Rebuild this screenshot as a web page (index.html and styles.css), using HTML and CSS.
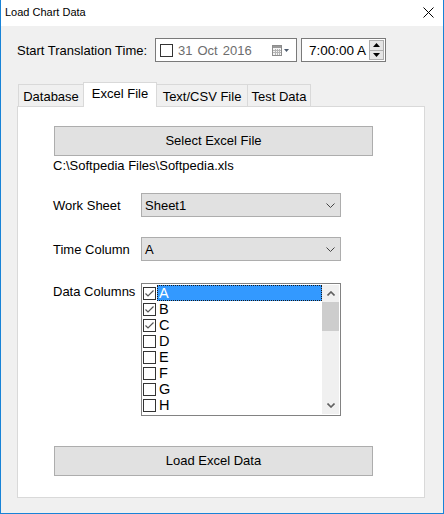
FILE: index.html
```html
<!DOCTYPE html>
<html>
<head>
<meta charset="utf-8">
<link rel="stylesheet" href="styles.css">
</head>
<body>
<div class="window">
  <div class="titlebar">
    <span class="title">Load Chart Data</span>
    <svg class="close" width="11" height="11" viewBox="0 0 11 11"><path d="M0.5 0.5 L10.5 10.5 M10.5 0.5 L0.5 10.5" stroke="#000" stroke-width="1"/></svg>
  </div>
  <div class="client">
    <div class="toprow">
      <span class="label">Start Translation Time:</span>
      <div class="datepicker">
        <span class="cb"></span>
        <span class="date"><span>31</span><span>Oct</span><span>2016</span></span>
        <svg class="cal" width="18" height="11" viewBox="0 0 18 11">
          <rect x="0.5" y="0.5" width="9" height="10" fill="#f4f4f4" stroke="#8c8c8c"/>
          <rect x="1" y="1" width="8" height="2" fill="#9a9a9a"/>
          <path d="M1 5.5 H9 M1 7.5 H9 M3.5 4 V10 M5.5 4 V10 M7.5 4 V10" stroke="#b4b4b4" stroke-width="1"/>
          <path d="M12 4 L17 4 L14.5 7 Z" fill="#4c5a6c"/>
        </svg>
      </div>
      <div class="timepicker">
        <span class="time">7:00:00 A</span>
        <div class="spin">
          <span class="sbtn"><svg width="7" height="4" viewBox="0 0 7 4"><path d="M0 4 L3.5 0 L7 4 Z" fill="#000"/></svg></span>
          <span class="sbtn"><svg width="7" height="4" viewBox="0 0 7 4"><path d="M0 0 L7 0 L3.5 4 Z" fill="#000"/></svg></span>
        </div>
      </div>
    </div>
    <div class="tabs">
      <div class="tab">Database</div>
      <div class="tab active">Excel File</div>
      <div class="tab">Text/CSV File</div>
      <div class="tab">Test Data</div>
    </div>
    <div class="panel">
      <div class="btn">Select Excel File</div>
      <div class="path">C:\Softpedia Files\Softpedia.xls</div>
      <div class="frow first">
        <span class="flabel">Work Sheet</span>
        <div class="combo"><span>Sheet1</span><svg width="9" height="5" viewBox="0 0 9 5"><path d="M0.5 0.5 L4.5 4.5 L8.5 0.5" fill="none" stroke="#444" stroke-width="1"/></svg></div>
      </div>
      <div class="frow">
        <span class="flabel">Time Column</span>
        <div class="combo"><span>A</span><svg width="9" height="5" viewBox="0 0 9 5"><path d="M0.5 0.5 L4.5 4.5 L8.5 0.5" fill="none" stroke="#444" stroke-width="1"/></svg></div>
      </div>
      <div class="frow list-row">
        <span class="flabel top">Data Columns</span>
        <div class="listbox">
          <div class="items">
            <div class="item"><span class="chk on"><svg width="11" height="11" viewBox="0 0 11 11"><path d="M1.5 5.5 L4 8 L9.5 2.5" fill="none" stroke="#555" stroke-width="1.2"/></svg></span><span class="txt sel">A</span></div>
            <div class="item"><span class="chk on"><svg width="11" height="11" viewBox="0 0 11 11"><path d="M1.5 5.5 L4 8 L9.5 2.5" fill="none" stroke="#555" stroke-width="1.2"/></svg></span><span class="txt">B</span></div>
            <div class="item"><span class="chk on"><svg width="11" height="11" viewBox="0 0 11 11"><path d="M1.5 5.5 L4 8 L9.5 2.5" fill="none" stroke="#555" stroke-width="1.2"/></svg></span><span class="txt">C</span></div>
            <div class="item"><span class="chk"></span><span class="txt">D</span></div>
            <div class="item"><span class="chk"></span><span class="txt">E</span></div>
            <div class="item"><span class="chk"></span><span class="txt">F</span></div>
            <div class="item"><span class="chk"></span><span class="txt">G</span></div>
            <div class="item"><span class="chk"></span><span class="txt">H</span></div>
          </div>
          <div class="scrollbar">
            <span class="arrow"><svg width="8" height="5" viewBox="0 0 8 5"><path d="M0.5 4.5 L4 1 L7.5 4.5" fill="none" stroke="#606060" stroke-width="1.6"/></svg></span>
            <span class="thumb"></span>
            <span class="track"></span>
            <span class="arrow"><svg width="8" height="5" viewBox="0 0 8 5"><path d="M0.5 0.5 L4 4 L7.5 0.5" fill="none" stroke="#606060" stroke-width="1.6"/></svg></span>
          </div>
        </div>
      </div>
      <div class="btn load">Load Excel Data</div>
    </div>
  </div>
</div>
</body>
</html>
```
FILE: styles.css
```css
* { box-sizing: border-box; }
html, body { margin: 0; padding: 0; }
body {
  width: 444px;
  height: 514px;
  font-family: "Liberation Sans", Arial, sans-serif;
  font-size: 13px;
  color: #000;
  overflow: hidden;
}
.window {
  width: 444px;
  height: 514px;
  border: 1px solid #1883d7;
  border-top: none;
  display: flex;
  flex-direction: column;
  background: #f0f0f0;
}
.titlebar {
  height: 26px;
  background: #fff;
  display: flex;
  align-items: center;
  padding-left: 4px;
  padding-right: 9px;
  flex: none;
}
.title {
  font-size: 11px;
  flex: 1;
  padding-bottom: 2px;
}
.close { display: block; margin-bottom: 1px; }
.client {
  flex: 1;
  padding: 12px 18px 15px 16px;
  display: flex;
  flex-direction: column;
}
.toprow {
  height: 24px;
  display: flex;
  align-items: center;
}
.label { width: 138px; }
.datepicker {
  width: 142px;
  height: 24px;
  border: 1px solid #7a7a7a;
  background: #fff;
  display: flex;
  align-items: center;
  padding-left: 4px;
}
.cb {
  width: 13px;
  height: 13px;
  border: 1px solid #333;
  background: #fff;
  margin-top: 1px;
}
.date {
  color: #6d6d6d;
  margin-left: 5px;
  display: flex;
  gap: 5px;
  width: 91px;
}
.cal { margin-left: 3px; display: block; }
.timepicker {
  width: 85px;
  height: 24px;
  margin-left: 4px;
  border: 1px solid #7a7a7a;
  background: #fff;
  display: flex;
  align-items: center;
  padding-left: 7px;
  padding-right: 1px;
}
.time {
  flex: 1;
  white-space: nowrap;
  font-size: 13.5px;
}
.spin {
  width: 15px;
  height: 20px;
  border: 1px solid #adadad;
  background: #e5e5e5;
  display: flex;
  flex-direction: column;
}
.sbtn {
  flex: 1;
  display: flex;
  align-items: center;
  justify-content: center;
}
.sbtn + .sbtn { border-top: 1px solid #adadad; }
.sbtn svg { display: block; }
.tabs {
  margin-top: 20px;
  height: 24px;
  display: flex;
  align-items: flex-end;
  padding-left: 1px;
  position: relative;
  z-index: 1;
}
.tab {
  height: 22px;
  border: 1px solid #d9d9d9;
  border-bottom: none;
  background: #f0f0f0;
  display: flex;
  align-items: center;
  justify-content: center;
  padding-top: 1px;
}
.tab:nth-child(1) { width: 66px; }
.tab:nth-child(2) { width: 73px; }
.tab:nth-child(3) { width: 92px; margin-left: -1px; }
.tab:nth-child(4) { width: 64px; margin-left: -1px; }
.tab.active {
  height: 25px;
  margin-bottom: -1px;
  background: #fff;
  padding-top: 0;
  padding-bottom: 3px;
  margin-left: -1px;
  width: 74px;
}
.panel {
  height: 392px;
  border: 1px solid #d9d9d9;
  background: #fff;
  padding: 19px 0 0 35px;
}
.btn {
  margin-left: 1px;
  width: 319px;
  height: 30px;
  background: #e1e1e1;
  border: 1px solid #adadad;
  display: flex;
  align-items: center;
  justify-content: center;
  padding-bottom: 1px;
}
.path {
  margin-top: 2px;
  line-height: 15px;
}
.frow {
  display: flex;
  align-items: center;
  margin-top: 20px;
}
.frow.first { margin-top: 20px; }
.flabel { width: 88px; }
.combo {
  width: 200px;
  height: 24px;
  background: #e1e1e1;
  border: 1px solid #adadad;
  display: flex;
  align-items: center;
  justify-content: space-between;
  padding-left: 3px;
  padding-right: 5px;
}
.combo svg { display: block; }
.list-row {
  margin-top: 22px;
  align-items: flex-start;
}
.flabel.top {
  line-height: 15px;
  padding-top: 1px;
}
.listbox {
  width: 200px;
  height: 133px;
  border: 1px solid #828282;
  padding: 1px;
  display: flex;
  background: #fff;
}
.items { flex: 1; }
.item {
  height: 16px;
  display: flex;
  align-items: flex-start;
  font-size: 14.5px;
}
.chk {
  width: 13px;
  height: 13px;
  border: 1px solid #333;
  margin-top: 2px;
  flex: none;
  display: flex;
  align-items: center;
  justify-content: center;
}
.chk svg { display: block; }
.txt {
  margin-left: 1px;
  height: 16px;
  line-height: 17px;
  padding-left: 2px;
}
.txt.sel {
  flex: 1;
  background: #3399ff;
  color: #fff;
  border: 1px dotted #1a1a1a;
  line-height: 15px;
  padding-left: 1px;
}
.scrollbar {
  width: 17px;
  display: flex;
  flex-direction: column;
  background: #f0f0f0;
}
.arrow {
  height: 17px;
  flex: none;
  display: flex;
  align-items: center;
  justify-content: center;
}
.arrow svg { display: block; }
.thumb {
  height: 29px;
  background: #cdcdcd;
  flex: none;
}
.track { flex: 1; }
.btn.load { margin-top: 30px; }
```
